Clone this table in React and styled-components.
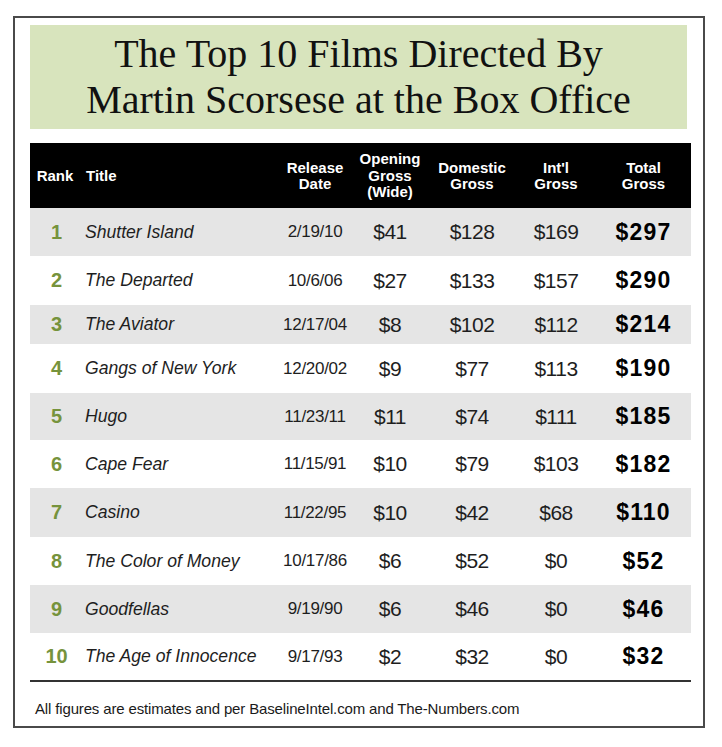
import React from "react";
import styled, { createGlobalStyle } from "styled-components";

const Global = createGlobalStyle`
  html, body { margin: 0; padding: 0; background: #ffffff; }
  body { font-family: "Liberation Sans", Arial, sans-serif; }
`;

const Page = styled.div`
  padding: 16px 0 0 13px;
`;

const Card = styled.div`
  box-sizing: border-box;
  width: 692px;
  height: 712px;
  border: 2px solid #4a4a4a;
  padding: 7px 12px 0 15px;
  display: flex;
  flex-direction: column;
`;

const Banner = styled.div`
  box-sizing: border-box;
  width: 657px;
  height: 104px;
  background: #d8e4bd;
  display: flex;
  flex-direction: column;
  align-items: center;
  justify-content: center;
  font-family: "Liberation Serif", "Times New Roman", serif;
  font-size: 40px;
  line-height: 46px;
  color: #111;
  margin-bottom: 14px;
`;

const BannerLine = styled.div`
  white-space: nowrap;
`;

const cols = "50px 198px 74px 76px 88px 80px 95px";

const HeaderRow = styled.div`
  display: grid;
  grid-template-columns: ${cols};
  height: 65px;
  background: #000;
  color: #fff;
  font-weight: bold;
  font-size: 15px;
  line-height: 16.5px;
  align-items: center;
`;

const HeadCell = styled.div`
  text-align: ${(p) => (p.$left ? "left" : "center")};
  padding-left: ${(p) => (p.$left ? "6px" : "0")};
  padding-top: 1px;
`;

const Row = styled.div`
  display: grid;
  grid-template-columns: ${cols};
  height: ${(p) => p.$h}px;
  background: ${(p) => (p.$shade ? "#e5e5e5" : "#ffffff")};
  align-items: center;
  color: #1e1e1e;
`;

const RankCell = styled.div`
  text-align: center;
  font-weight: bold;
  font-size: 20px;
  color: #76933c;
  padding-left: 3px;
`;

const TitleCell = styled.div`
  font-style: italic;
  font-size: 17.6px;
  padding-left: 5px;
  white-space: nowrap;
`;

const DateCell = styled.div`
  text-align: center;
  font-size: 17px;
  letter-spacing: -0.3px;
`;

const MoneyCell = styled.div`
  text-align: center;
  font-size: 21px;
  letter-spacing: -0.5px;
`;

const TotalCell = styled.div`
  text-align: center;
  font-size: 23px;
  font-weight: bold;
  letter-spacing: 1.2px;
  color: #000;
`;

const Rule = styled.div`
  height: 2px;
  background: #333;
`;

const Footer = styled.div`
  padding: 18px 0 0 5px;
  font-size: 15px;
  color: #1a1a1a;
  letter-spacing: -0.15px;
`;

const films = [
  [1, "Shutter Island", "2/19/10", "$41", "$128", "$169", "$297", 48],
  [2, "The Departed", "10/6/06", "$27", "$133", "$157", "$290", 49],
  [3, "The Aviator", "12/17/04", "$8", "$102", "$112", "$214", 39],
  [4, "Gangs of New York", "12/20/02", "$9", "$77", "$113", "$190", 49],
  [5, "Hugo", "11/23/11", "$11", "$74", "$111", "$185", 47],
  [6, "Cape Fear", "11/15/91", "$10", "$79", "$103", "$182", 48],
  [7, "Casino", "11/22/95", "$10", "$42", "$68", "$110", 49],
  [8, "The Color of Money", "10/17/86", "$6", "$52", "$0", "$52", 48],
  [9, "Goodfellas", "9/19/90", "$6", "$46", "$0", "$46", 48],
  [10, "The Age of Innocence", "9/17/93", "$2", "$32", "$0", "$32", 47],
];

export default function App() {
  return (
    <Page>
      <Global />
      <Card>
        <Banner>
          <BannerLine>The Top 10 Films Directed By</BannerLine>
          <BannerLine>Martin Scorsese at the Box Office</BannerLine>
        </Banner>
        <HeaderRow>
          <HeadCell>Rank</HeadCell>
          <HeadCell $left>Title</HeadCell>
          <HeadCell>
            Release
            <br />
            Date
          </HeadCell>
          <HeadCell>
            Opening
            <br />
            Gross
            <br />
            (Wide)
          </HeadCell>
          <HeadCell>
            Domestic
            <br />
            Gross
          </HeadCell>
          <HeadCell>
            Int'l
            <br />
            Gross
          </HeadCell>
          <HeadCell>
            Total
            <br />
            Gross
          </HeadCell>
        </HeaderRow>
        {films.map(([rank, title, date, open, dom, intl, total, h]) => (
          <Row key={rank} $h={h} $shade={rank % 2 === 1}>
            <RankCell>{rank}</RankCell>
            <TitleCell>{title}</TitleCell>
            <DateCell>{date}</DateCell>
            <MoneyCell>{open}</MoneyCell>
            <MoneyCell>{dom}</MoneyCell>
            <MoneyCell>{intl}</MoneyCell>
            <TotalCell>{total}</TotalCell>
          </Row>
        ))}
        <Rule />
        <Footer>
          All figures are estimates and per BaselineIntel.com and The-Numbers.com
        </Footer>
      </Card>
    </Page>
  );
}
